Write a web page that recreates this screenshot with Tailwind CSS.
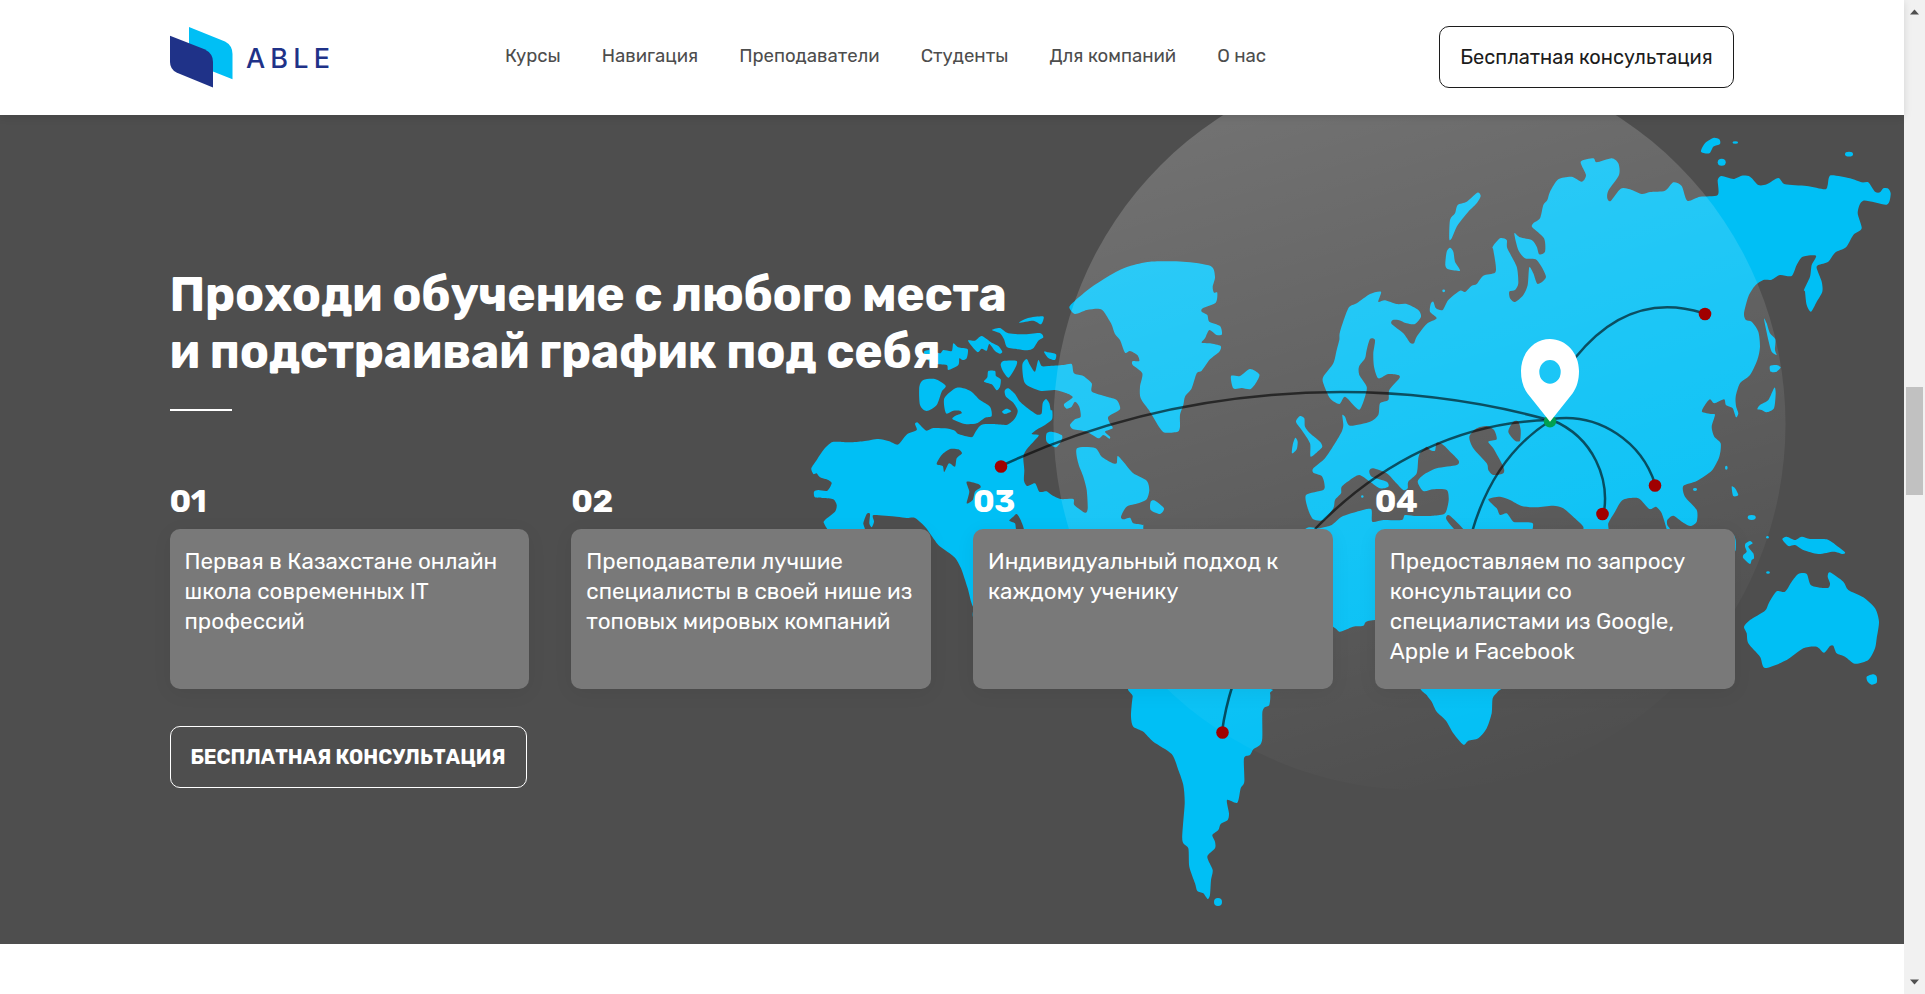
<!DOCTYPE html>
<html lang="ru">
<head>
<meta charset="utf-8">
<title>ABLE</title>
<script src="https://cdn.jsdelivr.net/npm/@tailwindcss/browser@4"></script>
</head>
<body class="bg-white overflow-hidden font-['Rubik',Inter,sans-serif]">
<div class="flex h-[994px] w-[1925px]">
  <div class="flex w-[1904px] flex-col">
    <header class="relative z-10 flex h-[115px] shrink-0 items-center bg-white pl-[170px] pr-[170px] shadow-[0_2px_8px_rgba(0,0,0,0.12)]">
      <a class="flex w-[335px] items-center">
        <svg class="h-[61px] w-[63px]" viewBox="170 27 63 61">
          <path fill="#00bff5" d="M189 27L225 41.5Q232.5 45.5 232.5 54V79.3L189 62Z"/>
          <path fill="#1f3288" d="M170 35.7L204.5 49.3Q213 53.5 213 62V87.5L177 72.8Q170 69.5 170 62Z"/>
        </svg>
        <span class="ml-[13px] mt-[2px] font-[Inter] text-[27px] font-medium leading-[27px] tracking-[5.2px] text-[#1f3288]">ABLE</span>
      </a>
      <nav class="flex gap-[41px] pb-px text-[18.6px] text-[#4d4d4d]">
        <a>Курсы</a><a>Навигация</a><a>Преподаватели</a><a>Студенты</a><a>Для компаний</a><a>О нас</a>
      </nav>
      <a class="mb-px ml-auto flex h-[62px] w-[295px] items-center justify-center rounded-[10px] border border-[#1c1c1c] text-[20px] text-[#1c1c1c]">Бесплатная консультация</a>
    </header>

    <section class="relative h-[829px] shrink-0 overflow-hidden bg-[#4e4e4e]">
      <svg class="absolute inset-0 h-[829px] w-[1904px]" viewBox="0 115 1904 829">
        <defs>
          <linearGradient id="globe" gradientUnits="userSpaceOnUse" x1="1290" y1="58" x2="1510" y2="790">
            <stop offset="0" stop-color="#fff" stop-opacity=".21"/><stop offset="1" stop-color="#fff" stop-opacity="0"/>
          </linearGradient>
        </defs>
        <g fill="#00bff5" id="land"></g>
        <g fill="#4e4e4e" id="sea"></g>
        <g fill="#00bff5">
          <ellipse cx="1721.7" cy="162.3" rx="4" ry="3.5"/><ellipse cx="1735.3" cy="142.5" rx="2.8" ry="1.3"/><ellipse cx="1849" cy="154.2" rx="4" ry="2.4"/>
          <ellipse cx="1726.3" cy="467.7" rx="1.3" ry="2"/><ellipse cx="1695" cy="489.5" rx="2" ry="1.4"/><ellipse cx="1751.7" cy="517.5" rx="4" ry="2.4"/>
          <ellipse cx="1767.5" cy="537.3" rx="1.3" ry="1.3"/><ellipse cx="1768" cy="572.5" rx="1.8" ry="1.2"/>
          <ellipse cx="1218" cy="902" rx="4" ry="4"/><circle cx="1443.7" cy="290.8" r="1.4"/><circle cx="1362.3" cy="496.5" r="1.2"/>
        </g>
        <circle cx="1419.5" cy="424" r="366" fill="url(#globe)"/>
        <g fill="none" stroke="#000" stroke-opacity=".6" stroke-width="2.5">
          <path d="M1001 466C1170 387 1370 371 1549 420"/>
          <path d="M1550 420C1460 422 1380 462 1315 529"/>
          <path d="M1222 732Q1225 709 1233 684"/>
          <path d="M1550 421C1515 443 1487 480 1472 532"/>
          <path d="M1552 420C1595 438 1609 480 1604 512"/>
          <path d="M1552 419C1600 412 1642 443 1655 484"/>
          <path d="M1575 358C1612 312 1655 298 1703 313"/>
        </g>
        <circle cx="1550" cy="421.3" r="6.2" fill="#00a050"/>
        <g fill="#a00000"><circle cx="1001" cy="466.5" r="6.3"/><circle cx="1222.5" cy="732.5" r="6.3"/><circle cx="1602.5" cy="514" r="6.3"/><circle cx="1655" cy="485.5" r="6.3"/><circle cx="1705" cy="314" r="6.3"/></g>
        <path fill="#fff" fill-rule="evenodd" d="M1550 421.7L1527.5 393.5C1523 387 1521 380 1521 371C1521 353 1534 339 1550 339S1579 353 1579 371C1579 380 1577 387 1572.5 393.5ZM1550 360A10.7 11.9 0 1 0 1550 383.8A10.7 11.9 0 1 0 1550 360Z"/>
      </svg>

      <div class="relative pl-[169.5px] pr-[170px] pt-[151px] text-white">
        <h1 class="text-[48px] font-bold leading-[57px] tracking-[-0.31px]">Проходи обучение с любого места<br>и подстраивай график под себя</h1>
        <div class="mt-[29px] h-[2px] w-[62px] bg-white"></div>
        <div class="mt-[71px] grid w-[1565px] grid-cols-4 gap-x-[42px]">
          <div>
            <div class="text-[32px] font-bold leading-[38px] tracking-[-0.6px]">01</div>
            <div class="mt-[9px] h-[160px] rounded-[10px] bg-[#797979] px-[15px] pt-[18px] text-[22.45px] leading-[30px] shadow-[0_4px_20px_rgba(0,0,0,0.06)]">Первая в Казахстане онлайн<br>школа современных IT<br>профессий</div>
          </div>
          <div>
            <div class="text-[32px] font-bold leading-[38px] tracking-[-0.6px]">02</div>
            <div class="mt-[9px] h-[160px] whitespace-nowrap rounded-[10px] bg-[#797979] px-[15px] pt-[18px] text-[22.45px] leading-[30px] shadow-[0_4px_20px_rgba(0,0,0,0.06)]">Преподаватели лучшие<br>специалисты в своей нише из<br>топовых мировых компаний</div>
          </div>
          <div>
            <div class="text-[32px] font-bold leading-[38px] tracking-[-0.6px]">03</div>
            <div class="mt-[9px] h-[160px] rounded-[10px] bg-[#797979] px-[15px] pt-[18px] text-[22.45px] leading-[30px] shadow-[0_4px_20px_rgba(0,0,0,0.06)]">Индивидуальный подход к<br>каждому ученику</div>
          </div>
          <div>
            <div class="text-[32px] font-bold leading-[38px] tracking-[-0.6px]">04</div>
            <div class="mt-[9px] h-[160px] rounded-[10px] bg-[#797979] px-[15px] pt-[18px] text-[22.45px] leading-[30px] shadow-[0_4px_20px_rgba(0,0,0,0.06)]">Предоставляем по запросу<br>консультации со<br>специалистами из Google,<br>Apple и Facebook</div>
          </div>
        </div>
        <a class="mt-[37px] flex h-[62px] w-[357px] items-center justify-center rounded-[10px] border border-white text-[20px] font-bold tracking-[0.06px]">БЕСПЛАТНАЯ КОНСУЛЬТАЦИЯ</a>
      </div>
    </section>
  </div>

  <div class="flex w-[21px] flex-col items-center bg-[#f1f1f1] py-[9px]">
    <svg class="h-[6px] w-[9px]" viewBox="0 0 9 6"><path fill="#505050" d="M0 5.5L4.5 .5L9 5.5Z"/></svg>
    <div class="mt-[372px] h-[108px] w-[17px] bg-[#c1c1c1]"></div>
    <svg class="mt-auto h-[6px] w-[9px]" viewBox="0 0 9 6"><path fill="#505050" d="M0 .5L4.5 5.5L9 .5Z"/></svg>
  </div>
</div>

<script>
// Outlines: [offsetX, offsetY, points], three units per pixel
const land = [
[800,290,"34,535 50,510 72,478 95,457 115,455 150,457 190,454 235,447 265,453 292,464 305,452 322,432 350,420 345,402 352,397 365,410 380,422 400,414 435,415 462,421 475,432 505,440 518,440 530,420 545,404 580,402 622,404 645,385 653,362 640,338 618,320 614,302 625,295 645,312 660,335 690,360 712,374 725,370 728,340 738,327 748,340 752,360 757,362 756,388 735,405 712,418 695,432 716,435 705,450 680,478 670,500 673,540 672,572 682,588 705,580 718,605 740,604 755,615 782,627 820,627 823,645 855,668 863,655 860,600 850,560 835,520 831,475 885,474 905,500 935,518 950,520 953,498 970,515 1000,550 1040,572 1048,600 1040,628 1015,640 980,650 963,680 970,688 990,683 1000,700 1028,705 1030,725 1030,1000 560,1000 519,950 503,895 483,835 465,803 438,782 415,765 393,735 375,710 345,684 320,684 290,680 225,675 218,680 222,695 215,712 208,700 210,672 200,672 190,700 190,725 95,725 72,700 75,690 105,665 110,645 100,628 70,624 45,622 42,605 55,600 82,602 95,580 85,570 60,562 50,550 40,552"],
[800,290,"657,98 684,84 728,79 730,90 722,103 700,92"],
[800,290,"576,120 600,114 625,130 670,133 720,129 730,142 715,152 700,175 682,181 655,178 622,172 612,148 600,130"],
[800,290,"504,152 525,152 545,138 575,158 595,168 607,185 600,191 585,183 568,162 560,182 545,176 532,186"],
[800,290,"372,185 390,180 420,190 430,180 455,183 460,160 475,172 503,178 500,205 488,210 478,205 475,225 445,240 440,225 400,222 380,205"],
[800,290,"602,225 610,213 650,213 645,235 626,263 610,245"],
[800,290,"565,243 585,243 588,258 602,268 600,290 590,301 575,283 552,275 562,262"],
[800,290,"358,290 370,270 405,267 437,287 425,305 410,345 380,363 360,345"],
[800,290,"433,325 470,293 510,302 540,330 570,350 575,378 555,383 530,400 495,402 458,388 465,378 485,370 480,362 460,362 438,370"],
[800,290,"606,365 620,356 634,364 615,372"],
[800,290,"732,185 745,187 768,193 765,210 745,204"],
[800,290,"667,225 680,207 690,225 705,245 715,210 725,228 745,228 790,225 815,222 822,250 850,258 875,280 876,305 920,320 950,330 960,358 925,380 930,400 938,415 915,425 930,440 928,446 910,435 895,445 860,425 820,418 810,405 825,388 842,380 838,350 825,335 815,350 800,356 792,343 818,322 800,310 765,300 720,302 675,280"],
[800,290,"740,430 755,425 785,435 785,450 768,472 740,455"],
[800,290,"1052,635 1065,632 1092,655 1080,672 1052,660"],
[1050,240,"58,202 75,182 120,145 170,112 205,92 240,78 300,65 400,65 482,78 495,110 488,140 492,158 502,158 497,188 458,205 455,215 472,225 478,245 510,258 516,283 500,285 478,270 465,295 455,308 480,310 512,318 508,335 480,358 455,392 440,400 425,445 405,470 400,495 390,525 390,560 383,575 345,578 330,565 300,515 272,475 270,440 277,400 248,375 248,363 268,363 262,345 240,333 225,338 210,300 195,282 183,250 160,213 145,206 110,210 75,222"],
[1050,240,"543,408 570,408 600,387 628,403 620,425 602,447 575,444 550,445"],
[1270,120,"78,905 90,888 103,895 105,920 120,940 150,965 157,980 145,993 122,1010 120,970 95,930"],
[1270,120,"66,1000 68,975 76,953 83,965 80,988"],
[1270,120,"333,515 325,545 345,541 380,552 410,552 445,570 453,590 435,612 410,610 385,600 368,600 365,612 400,640 420,668 432,670 440,650 470,612 500,595 480,575 482,552 490,545 498,565 518,570 535,540 570,512 585,516 605,497 620,492 640,467 675,458 677,435 670,390 668,380 690,355 710,360 712,385 740,440 745,490 735,510 718,515 720,535 735,546 760,525 773,495 778,442 790,460 803,492 828,470 800,420 765,415 745,390 733,340 750,352 785,360 800,380 808,403 825,395 822,355 787,322 790,310 810,295 820,255 832,240 840,215 865,178 905,170 935,185 948,165 932,125 970,115 980,127 1025,115 1045,130 1047,165 1015,212 1012,235 1022,243 1052,206 1080,208 1115,222 1140,216 1185,212 1210,187 1235,198 1252,242 1290,230 1343,225 1343,180 1355,168 1390,177 1415,167 1440,170 1465,195 1490,193 1525,174 1545,193 1610,198 1665,208 1673,195 1682,166 1740,175 1775,187 1795,187 1815,215 1830,217 1840,205 1855,206 1862,222 1850,254 1780,242 1763,278 1775,325 1750,345 1728,382 1695,398 1675,425 1645,435 1640,445 1655,485 1657,515 1640,545 1623,575 1610,555 1605,515 1602,510 1620,470 1625,435 1638,407 1598,410 1580,435 1565,468 1530,465 1505,479 1480,480 1455,497 1435,530 1422,580 1428,600 1445,605 1465,635 1470,680 1462,720 1440,765 1410,790 1397,830 1398,858 1405,880 1398,892 1388,865 1368,855 1362,838 1333,850 1320,838 1305,855 1296,875 1325,882 1335,885 1325,920 1333,950 1352,970 1348,1010 1325,1052 1280,1083 1240,1098 1245,1130 1280,1170 1280,1205 1262,1218 1240,1208 1210,1187 1192,1200 1192,1215 1200,1228 1200,1260 1195,1260 1190,1228 1175,1180 1158,1160 1138,1167 1105,1135 1058,1140 1035,1175 1015,1210 1013,1245 943,1245 940,1220 920,1200 880,1165 850,1157 800,1162 755,1158 720,1140 690,1130 655,1138 680,1165 690,1185 710,1180 730,1205 750,1207 788,1210 785,1245 785,1300 600,1500 315,1500 280,1517 249,1520 210,1535 189,1520 100,1480 100,1240 150,1225 185,1215 215,1190 260,1175 303,1167 307,1205 340,1200 395,1200 405,1185 440,1188 490,1187 525,1180 536,1140 530,1110 490,1108 460,1113 443,1085 460,1065 500,1045 560,1035 566,1022 545,1000 520,975 500,968 495,992 480,990 470,980 450,1000 445,1015 440,1060 415,1085 413,1105 400,1110 375,1085 350,1060 310,1045 298,1052 305,1070 350,1085 355,1100 330,1105 300,1085 268,1065 240,1080 215,1100 213,1120 195,1140 190,1165 160,1200 130,1198 115,1170 108,1125 160,1110 163,1090 155,1068 130,1058 130,1045 165,1015 195,970 215,935 220,915 217,885 225,890 240,917 300,905 325,885 330,850 355,840 358,810 388,775 385,765 355,762 325,775 312,740 310,700 315,660 300,657 290,690 285,715 267,740 268,765 290,800 285,830 270,868 255,860 225,830 208,852 180,835 160,790 160,770 190,730 200,690 208,660 210,635 235,565 260,550 300,522"],
[1270,120,"622,218 632,228 620,250 595,275 580,293 560,320 545,355 538,357 540,300 555,280 563,255 590,245"],
[1270,120,"530,395 540,383 550,395 555,425 570,452 535,448 526,435"],
[1570,120,"393,95 405,70 430,54 448,58 450,72 430,80 418,100"],
[1570,120,"582,597 590,610 600,640 616,658 615,690 620,705 605,695 595,660"],
[1570,120,"600,738 620,735 632,742 620,755 602,755"],
[1570,120,"613,803 617,820 612,865 590,877 575,870 562,868 570,855 595,840"],
[1570,400,"485,260 495,265 505,285 490,288"],
[1570,400,"527,430 540,423 548,430 535,440 550,460 552,475 545,480 540,492 520,475 520,465 530,455 525,440"],
[1570,400,"637,418 650,410 675,420 695,410 720,417 770,418 800,437 825,457 818,462 790,455 745,462 700,450 675,435 655,438"],
[1570,400,"522,680 540,660 585,632 597,608 620,574 645,575 665,545 685,522 710,522 722,555 750,563 775,563 780,550 773,530 780,517 820,545 835,570 880,592 915,625 927,665 920,715 915,745 895,780 855,791 825,770 800,760 790,737 780,738 762,758 740,740 700,745 650,780 585,804 570,770 535,730 530,700"],
[1570,400,"890,830 910,823 920,830 920,848 905,854 893,845"],
[1570,400,"490,405 497,420 497,450 490,455"],
[1100,650,"108,110 98,140 93,200 100,230 130,245 160,275 215,312 235,360 250,405 254,460 247,570 265,595 268,650 285,700 292,723 310,730 323,747 330,735 333,690 338,660 322,620 345,595 345,575 337,555 355,540 362,522 383,510 387,490 381,450 412,458 422,415 433,395 432,325 450,315 460,298 480,285 487,265 487,190 493,173 508,165 510,130 490,115"],
[1100,650,"972,110 980,135 995,155 1010,185 1038,212 1060,250 1090,284 1105,272 1135,265 1160,235 1175,190 1178,145 1193,125 1193,110"]
];
const sea = [
[800,290,"410,522 425,495 450,477 475,478 486,490 470,505 465,530 447,520 433,546 428,528"],
[800,290,"500,575 535,582 542,592 525,605 518,630 500,640 508,605"],
[800,290,"650,672 640,680 628,692 645,700 650,722 672,722 662,690"],
[1270,120,"598,950 620,925 650,918 672,930 680,958 655,965 670,985 700,1040 700,1060 670,1065 655,1050 650,1030 610,985"],
[1270,120,"715,935 730,905 745,905 752,930 750,962 735,962"],
[1270,120,"530,1188 540,1187 580,1227 580,1240 560,1235 530,1200"]
];
// Closed Catmull-Rom curve through the points
function outline([ox, oy, s]) {
  const p = s.split(' ').map(v => v.split(',').map((n, i) => +n / 3 + (i ? oy : ox)));
  const n = p.length, k = 8, at = i => p[(i + n) % n];
  let d = 'M' + p[0].join(' ');
  for (let i = 0; i < n; i++) {
    const a = at(i - 1), b = at(i), c = at(i + 1), e = at(i + 2);
    d += 'C' + [b[0] + (c[0] - a[0]) / k, b[1] + (c[1] - a[1]) / k, c[0] - (e[0] - b[0]) / k, c[1] - (e[1] - b[1]) / k, c[0], c[1]].map(v => v.toFixed(1)).join(' ');
  }
  return d + 'Z';
}
for (const [id, list] of [['land', land], ['sea', sea]]) {
  for (const shape of list) {
    const path = document.createElementNS('http://www.w3.org/2000/svg', 'path');
    path.setAttribute('d', outline(shape));
    document.getElementById(id).append(path);
  }
}
</script>
</body>
</html>
